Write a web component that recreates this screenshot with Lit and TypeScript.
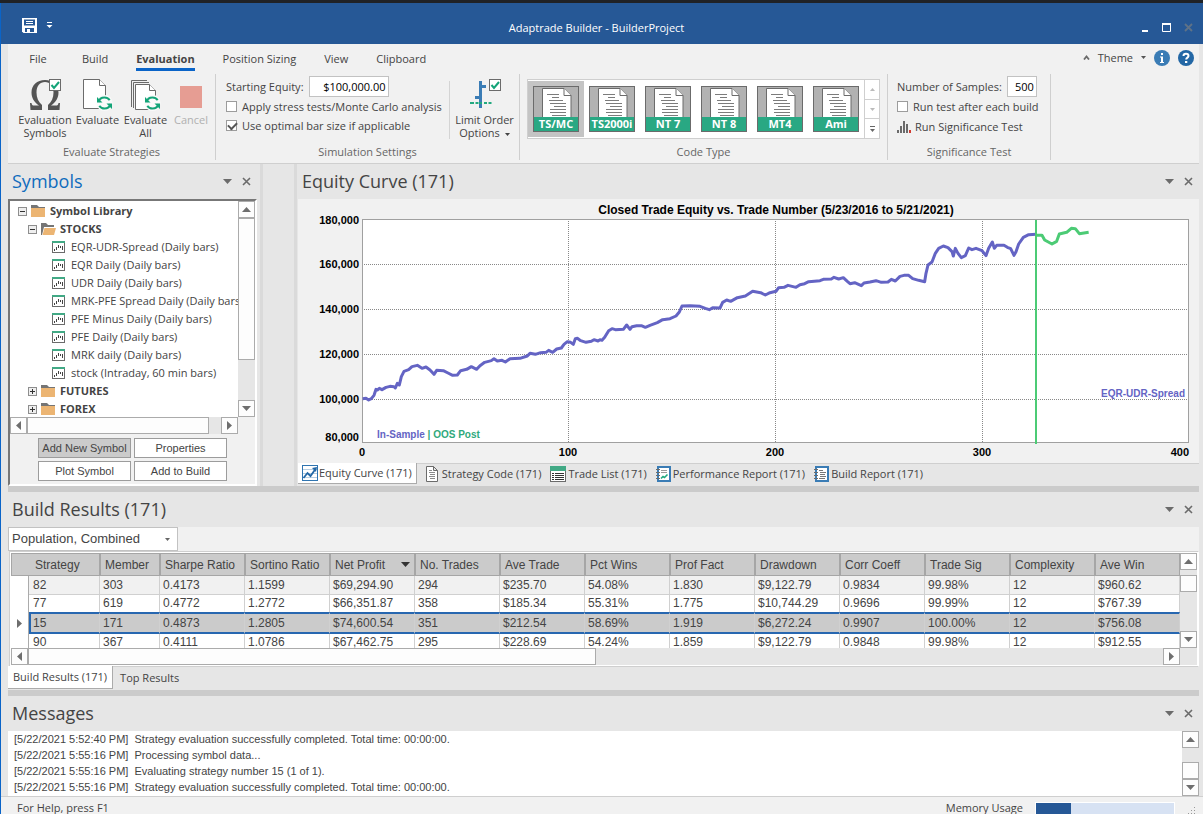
import { LitElement, html, svg, css, nothing } from "lit";
import { customElement, property } from "lit/decorators.js";
import { classMap } from "lit/directives/class-map.js";

const base = css`
  * { box-sizing: border-box; }
  button, input, select {
    font: inherit;
    color: inherit;
    margin: 0;
    padding: 0;
    border: 0;
    border-radius: 0;
    background: none;
    appearance: none;
  }
  svg { display: block; flex: none; }
`;

type Dir = "up" | "down" | "left" | "right";
const ARROWS: Record<Dir, string> = {
  up: "M4 11 8.5 6 13 11z",
  down: "M4 6 8.5 11 13 6z",
  left: "M11 4 6 8.5 11 13z",
  right: "M6 4 11 8.5 6 13z",
};

/** Classic scroll bar: two arrow buttons and a thumb on a grey track. */
@customElement("scroll-bar")
class ScrollBar extends LitElement {
  @property() dir = "vertical";
  @property({ type: Number }) before = 0;
  @property({ type: Number }) thumb = 17;
  static styles = [base, css`
    :host { display: block; flex: none; background: #e6e6e6; }
    .bar { display: flex; height: 100%; flex-direction: column; width: 17px; }
    .horizontal { flex-direction: row; width: 100%; height: 17px; }
    button { flex: none; width: 17px; height: 17px; border: 1px solid #ababab; background: #fdfdfd; }
    button svg { margin: -1px; }
    .track { flex: 1; display: flex; flex-direction: inherit; overflow: hidden; }
    .space { flex: none; }
    .thumb { flex: none; border: 1px solid #ababab; background: #fdfdfd; }
  `];
  arrow(d: Dir) {
    return html`<button aria-label="Scroll ${d}"><svg width="17" height="17"><path d=${ARROWS[d]} fill="#6e6e6e" /></svg></button>`;
  }
  render() {
    const h = this.dir === "horizontal";
    const side = h ? "width" : "height";
    return html`<div class="bar ${this.dir}">
      ${this.arrow(h ? "left" : "up")}
      <div class="track">
        <div class="space" style="${side}:${this.before}px"></div>
        <div class="thumb" style="${side}:${this.thumb}${h ? "%" : "px"}"></div>
      </div>
      ${this.arrow(h ? "right" : "down")}
    </div>`;
  }
}

/** Heading strip of a docked pane. */
@customElement("pane-title")
class PaneTitle extends LitElement {
  @property() label = "";
  @property({ type: Boolean }) active = false;
  static styles = [base, css`
    :host { display: block; flex: none; }
    header { display: flex; align-items: center; height: 35px; padding: 0 1px 0 4px; color: #444; }
    h2 { flex: 1; margin: 0; padding-bottom: 2px; font: 400 18px/24px "Open Sans", sans-serif; }
    .active { color: #0f6cbd; }
    button { width: 19px; height: 19px; display: grid; place-items: center; }
  `];
  render() {
    return html`<header>
      <h2 class=${this.active ? "active" : ""}>${this.label}</h2>
      <button aria-label="Pane menu"><svg width="9" height="5"><path d="M0 0h9L4.5 5z" fill="#6b6b6b" /></svg></button>
      <button aria-label="Close pane"><svg width="9" height="9"><path d="M1 1l7 7M8 1l-7 7" stroke="#6b6b6b" stroke-width="1.6" /></svg></button>
    </header>`;
  }
}

const greenCheck = (x: number, y: number) => svg`
  <rect x=${x + 0.5} y=${y + 0.5} width="11" height="11" fill="#fff" stroke="#6b6b6b" />
  <path d="M${x + 2.5} ${y + 6}l2.5 3 5-6" fill="none" stroke="#13a478" stroke-width="2" />`;

const cycle = (x: number, y: number) => svg`
  <g transform="translate(${x} ${y})" fill="none" stroke="#13a478" stroke-width="2">
    <circle cx="7.5" cy="7" r="8" fill="#fafafa" stroke="none" />
    <path d="M1.500 6C2.200 3.200 4.700 1.500 7.500 1.500c2.200 0 4 1 5.200 2.700M13.500 8c-.7 2.800-3.200 4.500-6 4.500-2.200 0-4-1-5.200-2.700" />
    <path d="M0 1v5.500h5.500zM15 13V7.500H9.500z" fill="#13a478" stroke="none" />
  </g>`;

const page = (x: number, y: number, w: number, h: number) => svg`
  <path d="M${x} ${y}h${w - 6}l6 6v${h - 6}h${-w}z" fill="#fff" stroke="#6b6b6b" />
  <path d="M${x + w - 6} ${y}v6h6" fill="#fff" stroke="#6b6b6b" />`;

const symbolsIcon = html`<svg width="34" height="34" viewBox="0 0 34 34">
  <path d="M2 24h1.500c.3 2 1 2.500 2.500 2.500h5C6 23 3.500 19 3.500 13.500 3.500 6 9 1 17 1s13.500 5 13.500 12.500c0 5.500-2.500 9.500-7.500 13h5c1.500 0 2.200-.5 2.500-2.500H32l-.5 7H20v-5c3.500-3 5.500-7 5.500-12.500C25.500 7 22 3 17 3S8.500 7 8.500 13.500C8.500 19 10.500 23 14 26v5H2.500z" fill="#555" />
  ${greenCheck(21, 0)}</svg>`;
const evalIcon = html`<svg width="34" height="34" viewBox="0 0 34 34">${page(2.5, 0.5, 22, 29)}${cycle(16, 17)}</svg>`;
const evalAllIcon = html`<svg width="34" height="34" viewBox="0 0 34 34">
  <path d="M2.500 28V1.500H18M4.500 29V3.500H20" fill="none" stroke="#6b6b6b" />${page(6.5, 5.5, 20, 25)}${cycle(16, 17)}</svg>`;
const cancelIcon = html`<svg width="34" height="34" viewBox="0 0 34 34"><rect x="6" y="7" width="22" height="22" fill="#e69d93" /></svg>`;
const limitIcon = html`<svg width="34" height="34" viewBox="0 0 34 34">
  <path d="M11 2h3v27h-3zM14 6h4v3h-4zM7 17h4v3H7z" fill="#3a7cb5" />
  <path d="M2 24h4M7.500 24h3M11 24h3M16 24h3M20.500 24h3" stroke="#22a980" stroke-width="2" />
  ${greenCheck(21, 0)}</svg>`;

const codeIcon = (label: string) => html`<svg width="46" height="46" viewBox="0 0 46 46">
  <rect width="46" height="46" fill="#b2b2b2" />
  <path d="M9.500 32V2.500H31l7 7V32z" fill="#fff" stroke="#6b6b6b" />
  <path d="M31 2.500v7h7" fill="#fff" stroke="#6b6b6b" />
  <path d="M14 8.500h12M19 11.500h7M16 14.500h14M17 17.500h16M21 20.500h12M17 23.500h16M17 26.500h16M19 29.500h14" stroke="#7c7c7c" />
  <rect y="31" width="46" height="15" fill="#29a883" />
  <rect x=".5" y=".5" width="45" height="45" fill="none" stroke="#6b6b6b" />
  <text x="23" y="42" text-anchor="middle" font-family="Open Sans, sans-serif" font-weight="700" font-size="11" fill="#fff">${label}</text>
</svg>`;

const folder = html`<svg width="15" height="14" viewBox="0 0 15 14">
  <path d="M0 1h6l2 2h6v2H0z" fill="#757575" /><path d="M0 4h14v9H0z" fill="#ecb573" /></svg>`;
const folderOpen = html`<svg width="15" height="14" viewBox="0 0 15 14">
  <path d="M0 1h5l2 2h6v2H3L1 13H0z" fill="#757575" /><path d="M3.500 6H15l-2 7H1.500z" fill="#ecb573" /></svg>`;
const barsIcon = html`<svg width="13" height="12" viewBox="0 0 13 12">
  <rect x=".5" y=".5" width="12" height="11" fill="#fff" stroke="#6b6b6b" />
  <rect width="13" height="2" fill="#41a985" />
  <path d="M2.500 8v2M4.500 6v3M6.500 4v3M8.500 5v2M10.500 5v4" stroke="#444" /></svg>`;
const expander = (open: boolean) => html`<svg width="9" height="9" viewBox="0 0 9 9">
  <rect x=".5" y=".5" width="8" height="8" fill="#efefef" stroke="#8e8e8e" />
  <path d=${open ? "M2 4.500h5" : "M2 4.500h5M4.500 2v5"} stroke="#333" /></svg>`;

const tabIcons = {
  curve: html`<svg width="16" height="16" viewBox="0 0 16 16"><rect x=".5" y=".5" width="15" height="15" fill="#fff" stroke="#2f74b0" />
    <path d="M1 4.500h14M1 8.500h14M1 12.500h14" stroke="#b8cfe2" /><path d="M1.500 13l4-5 3 3 5-7" fill="none" stroke="#2367a5" stroke-width="1.800" /><path d="M10 3l5-1-1 5z" fill="#2367a5" /></svg>`,
  page: html`<svg width="14" height="16" viewBox="0 0 14 16"><path d="M.5.5h7l4 4v11H.5z M7.500.5v4h4" fill="#fff" stroke="#6b6b6b" />
    <path d="M3 4.500h3M3 6.500h6M4 8.500h5M3 10.500h6M4 12.500h5" stroke="#8a8a8a" /></svg>`,
  list: html`<svg width="16" height="16" viewBox="0 0 16 16"><rect x=".5" y=".5" width="15" height="15" fill="#fff" stroke="#6b6b6b" />
    <rect width="16" height="5" fill="#41a985" /><path d="M2 7.500h2M5 7.500h9M2 9.500h2M5 9.500h9M2 11.500h2M5 11.500h9M2 13.500h2M5 13.500h9" stroke="#333" /></svg>`,
  perf: html`<svg width="15" height="16" viewBox="0 0 15 16"><rect x="2" y="1" width="12" height="14" fill="#fff" stroke="#3a7cb5" stroke-width="2" />
    <path d="M0 3.500h4M0 6.500h4M0 9.500h4M0 12.500h4" stroke="#6b6b6b" /><path d="M5 4.500h6M5 6.500h6" stroke="#9a9a9a" /><path d="M5 12.500l2-2 1.500 1 3-3" fill="none" stroke="#22a980" stroke-width="1.600" /></svg>`,
  report: html`<svg width="15" height="16" viewBox="0 0 15 16"><rect x="2" y="1" width="12" height="14" fill="#fff" stroke="#3a7cb5" stroke-width="2" />
    <path d="M0 3.500h4M0 6.500h4M0 9.500h4M0 12.500h4" stroke="#6b6b6b" /><path d="M5 4.500h4M6 6.500h6M6 8.500h5M6 10.500h6M5 12.500h6" stroke="#777" /></svg>`,
};

/** Application title bar and ribbon. */
@customElement("app-ribbon")
class AppRibbon extends LitElement {
  static styles = [base, css`
    :host { display: block; flex: none; font: 11px/13px "Open Sans", sans-serif; color: #444; }
    .title { display: grid; grid-template-columns: 1fr auto 1fr; align-items: center; height: 41px; padding: 8px 10px 0 21px; background: #265896; color: #fff; }
    h1 { margin: 0; padding-right: 22px; font: 400 11px/16px "Open Sans", sans-serif; }
    .quick { display: flex; align-items: center; gap: 9px; margin-top: -5px; }
    .win { display: flex; justify-content: flex-end; gap: 13px; align-items: center; }
    .ribbon { margin: 0 4px 0 7px; background: #f1f1f1; border-bottom: 1px solid #cfcfcf; height: 120px; }
    .tabs { display: flex; height: 30px; }
    .tabs button { padding: 8px 14px 0; height: 30px; display: flex; flex-direction: column; align-items: center; }
    .tabs .file { min-width: 60px; }
    .tabs .on { font-weight: 700; }
    .tabs .on::after { content: ""; align-self: stretch; height: 3px; margin-top: 3px; background: #0a64c8; }
    .right { margin-left: auto; display: flex; align-items: center; gap: 8px; padding: 0 5px 3px 0; }
    .right button { display: flex; flex-direction: row; align-items: center; gap: 8px; padding: 0; height: 17px; }
    .groups { display: flex; height: 86px; }
    .group { display: flex; flex-direction: column; border-right: 1px solid #cfcfcf; flex: none; }
    .body { flex: 1; display: flex; }
    .name { margin: 0; text-align: center; height: 16px; font: 400 11px/15px "Open Sans", sans-serif; color: #666; }
    .big { display: flex; flex-direction: column; align-items: center; padding-top: 5px; }
    .big:disabled { color: #b0b0b0; }
    .caret { display: inline-block; vertical-align: middle; margin-left: 2px; }
    .g1 { width: 208px; }
    .g1 .body { display: grid; grid-template-columns: 56px 49px 47px 44px; padding-left: 9px; }
    .g2 { width: 304px; }
    .settings { padding: 1px 7px 0 10px; width: 233px; }
    .rule { width: 1px; height: 58px; margin-top: 7px; background: #d4d4d4; }
    .field { display: flex; align-items: center; gap: 5px; height: 22px; }
    .field input { border: 1px solid #c2c2c2; background: #fff; color: #000; height: 21px; text-align: right; padding-right: 2px; }
    .equity { width: 80px; }
    .samples { width: 30px; }
    .check { display: flex; align-items: center; gap: 5px; height: 19px; white-space: nowrap; }
    .check input { flex: none; width: 11px; height: 11px; border: 1px solid #9c9c9c; background: #fff; display: grid; }
    .check input:checked::after { content: ""; width: 7px; height: 4px; margin: 1px; border: solid #555; border-width: 0 0 2px 2px; transform: rotate(-45deg); }
    .limit { flex: 1; }
    .g3 { width: 368px; }
    .gallery { flex: 1; display: flex; margin: 5px 7px 0; height: 60px; border: 1px solid #cfcfcf; background: #fff; }
    .gallery .item { flex: none; width: 56px; height: 56px; display: grid; place-items: center; margin-top: 1px; }
    .gallery .sel { background: #c4c4c4; }
    .spin { flex: 1; display: flex; flex-direction: column; border-left: 1px solid #cfcfcf; }
    .spin button { flex: 1; display: grid; place-items: center; }
    .spin button + button { border-top: 1px solid #cfcfcf; }
    .g4 { width: 163px; }
    .g4 .body { flex-direction: column; padding: 1px 9px 0; }
    .run { display: flex; align-items: center; gap: 4px; height: 21px; }
  `];
  render() {
    return html`
      <div class="title">
        <div class="quick">
          <svg width="15" height="15" viewBox="0 0 15 15"><path d="M0 0h15v15H1.500L0 13.500z" fill="#fff" /><path d="M2 1.500h11v6H2zM3 10h9v4H3z" fill="#265896" /><path d="M4 3.500h7M4 5.500h7" stroke="#fff" /><path d="M5 11h3v3H5z" fill="#fff" /></svg>
          <svg width="7" height="7" viewBox="0 0 7 7"><path d="M1 .5h5" stroke="#fff" /><path d="M.5 3h6l-3 3z" fill="#fff" /></svg>
        </div>
        <h1>Adaptrade Builder - BuilderProject</h1>
        <div class="win">
          <svg width="7" height="10"><path d="M0 8h6" stroke="#fff" stroke-width="2" /></svg>
          <svg width="9" height="9"><path d="M.5.5h8v8h-8z" fill="none" stroke="#fff" /><path d="M0 1h9" stroke="#fff" stroke-width="2" /></svg>
          <svg width="9" height="9"><path d="M1 1l7 7M8 1l-7 7" stroke="#5f7287" stroke-width="1.800" /></svg>
        </div>
      </div>
      <div class="ribbon">
        <nav class="tabs">
          <button class="file">File</button><button>Build</button><button class="on">Evaluation</button>
          <button>Position Sizing</button><button>View</button><button>Clipboard</button>
          <div class="right">
            <svg width="7" height="5"><path d="M1 4.500 3.500 1.500 6 4.500" fill="none" stroke="#6b6b6b" stroke-width="1.800" /></svg>
            <button>Theme <svg width="5" height="3"><path d="M0 0h5L2.500 3z" fill="#555" /></svg></button>
            <svg width="16" height="16"><circle cx="8" cy="8" r="8" fill="#3a7cb5" /><path d="M7 3h2v2H7zM6 6.500h3V12h1v1H6v-1h1V7.500H6z" fill="#fff" /></svg>
            <svg width="16" height="16"><circle cx="8" cy="8" r="8" fill="#2367a5" /><path d="M5.500 6c0-3 5-3 5 0 0 1.700-2.300 1.600-2.300 3.600" fill="none" stroke="#fff" stroke-width="2" /><path d="M7 11h2.300v2H7z" fill="#fff" /></svg>
          </div>
        </nav>
        <div class="groups">
          <section class="group g1">
            <div class="body">
              <button class="big">${symbolsIcon}<span>Evaluation<br />Symbols</span></button>
              <button class="big">${evalIcon}<span>Evaluate</span></button>
              <button class="big">${evalAllIcon}<span>Evaluate<br />All</span></button>
              <button class="big" disabled>${cancelIcon}<span>Cancel</span></button>
            </div>
            <h3 class="name">Evaluate Strategies</h3>
          </section>
          <section class="group g2">
            <div class="body">
              <div class="settings">
                <div class="field"><label for="eq">Starting Equity:</label><input id="eq" class="equity" value="$100,000.00" /></div>
                <label class="check"><input type="checkbox" />Apply stress tests/Monte Carlo analysis</label>
                <label class="check"><input type="checkbox" checked />Use optimal bar size if applicable</label>
              </div>
              <div class="rule"></div>
              <button class="big limit">${limitIcon}<span>Limit Order<br />Options <svg class="caret" width="5" height="3"><path d="M0 0h5L2.500 3z" fill="#444" /></svg></span></button>
            </div>
            <h3 class="name">Simulation Settings</h3>
          </section>
          <section class="group g3">
            <div class="body"><div class="gallery">
              ${["TS/MC", "TS2000i", "NT 7", "NT 8", "MT4", "Ami"].map((t, i) =>
                html`<button class=${classMap({ item: true, sel: i === 0 })}>${codeIcon(t)}</button>`)}
              <div class="spin">
                <button aria-label="Previous row"><svg width="5" height="3"><path d="M0 3h5L2.500 0z" fill="#bbb" /></svg></button>
                <button aria-label="Next row"><svg width="5" height="3"><path d="M0 0h5L2.500 3z" fill="#bbb" /></svg></button>
                <button aria-label="More"><svg width="5" height="6"><path d="M0 .5h5" stroke="#666" /><path d="M0 3h5L2.500 6z" fill="#666" /></svg></button>
              </div>
            </div></div>
            <h3 class="name">Code Type</h3>
          </section>
          <section class="group g4">
            <div class="body">
              <div class="field"><label for="ns">Number of Samples:</label><input id="ns" class="samples" value="500" /></div>
              <label class="check"><input type="checkbox" />Run test after each build</label>
              <button class="run"><svg width="14" height="12"><path d="M0 9h2v3H0zM3 5h2v7H3zM6 0h2v12H6zM9 3h2v9H9z" fill="#6b6b6b" /><path d="M12 9h2v3h-2z" fill="#d13b30" /></svg>Run Significance Test</button>
            </div>
            <h3 class="name">Significance Test</h3>
          </section>
        </div>
      </div>`;
  }
}

const LEAVES = [
  "EQR-UDR-Spread (Daily bars)", "EQR Daily (Daily bars)", "UDR Daily (Daily bars)", "MRK-PFE Spread Daily (Daily bars)",
  "PFE Minus Daily (Daily bars)", "PFE Daily (Daily bars)", "MRK daily (Daily bars)", "stock (Intraday, 60 min bars)",
];

/** Tree of symbols with its command buttons. */
@customElement("symbols-pane")
class SymbolsPane extends LitElement {
  static styles = [base, css`
    :host { box-sizing: border-box; display: flex; flex-direction: column; width: 255px; flex: none; padding-right: 3px; border-right: 3px solid #dadada; font: 11px/18px "Open Sans", sans-serif; color: #444; }
    .box { flex: 1; min-height: 0; display: flex; flex-direction: column; border: 2px solid; border-color: #777 #fff #fff #777; background: #f1f1f1; }
    .area { flex: 1; min-height: 0; display: flex; background: #fff; }
    .tree { flex: 1; min-width: 0; overflow: hidden; margin: 0; padding: 1px 0 0; list-style: none; }
    .tree li { display: flex; align-items: center; height: 18px; white-space: nowrap; }
    .node { font-weight: 700; gap: 4px; padding-left: 18px; }
    .root { padding-left: 8px; }
    .leaf { gap: 6px; padding-left: 42px; }
    .hbar { display: flex; }
    .hbar scroll-bar { flex: 1; margin-right: 17px; }
    .buttons { display: grid; grid-template-columns: 93px 93px; justify-content: center; gap: 3px; padding: 4px 0 3px; }
    .buttons button { height: 20px; border: 1px solid #9c9c9c; background: #fff; font: 11px/18px "Liberation Sans", sans-serif; }
    .buttons .down { background: #cbcbcb; }
  `];
  render() {
    const node = (t: string, icon: unknown, open: boolean, root = false) =>
      html`<li class=${classMap({ node: true, root })}>${expander(open)}${icon}<span>${t}</span></li>`;
    return html`
      <pane-title label="Symbols" active></pane-title>
      <div class="box">
        <div class="area">
          <ul class="tree">
            ${node("Symbol Library", folder, true, true)}
            ${node("STOCKS", folderOpen, true)}
            ${LEAVES.map((t) => html`<li class="leaf">${barsIcon}<span>${t}</span></li>`)}
            ${node("FUTURES", folder, false)}
            ${node("FOREX", folder, false)}
          </ul>
          <scroll-bar .thumb=${142}></scroll-bar>
        </div>
        <div class="hbar"><scroll-bar dir="horizontal" .thumb=${94}></scroll-bar></div>
        <div class="buttons">
          <button class="down">Add New Symbol</button><button>Properties</button>
          <button>Plot Symbol</button><button>Add to Build</button>
        </div>
      </div>`;
  }
}

const IN_SAMPLE = "218,716 228,715 236,720 244,716 252,706 258,688 262,690 268,685 276,689 288,682 300,679 312,680 316,684 322,670 328,675 334,650 342,634 356,629 366,620 382,616 396,625 408,621 420,630 432,643 440,631 460,632 474,639 488,646 502,645 512,632 530,628 544,620 560,628 570,617 584,607 604,602 612,596 622,603 636,601 646,606 660,596 690,595 712,588 720,580 736,583 752,578 768,577 776,571 788,577 800,567 814,564 822,553 832,545 842,547 850,553 856,536 862,535 872,542 888,547 904,544 912,539 924,543 930,539 936,541 944,532 956,512 966,506 976,509 1000,508 1010,495 1020,508 1026,500 1040,497 1054,497 1066,502 1080,496 1102,488 1118,479 1140,476 1158,468 1168,456 1176,438 1200,437 1230,439 1246,445 1258,449 1268,443 1290,444 1298,427 1310,420 1322,424 1342,413 1366,408 1388,394 1412,398 1426,405 1440,398 1458,394 1466,383 1482,382 1494,376 1518,382 1530,374 1544,371 1556,365 1590,362 1600,358 1624,357 1632,352 1646,357 1660,353 1672,364 1680,371 1694,368 1714,377 1722,369 1740,366 1758,362 1774,367 1794,366 1804,358 1816,363 1830,349 1842,346 1856,346 1868,356 1886,361 1904,365 1908,340 1914,315 1926,306 1936,280 1946,265 1960,258 1974,263 1986,275 1990,288 1996,265 2004,280 2014,293 2026,287 2036,264 2046,269 2058,265 2076,272 2088,287 2096,265 2107,246 2113,265 2120,256 2142,256 2152,262 2162,266 2172,286 2178,275 2186,252 2200,232 2216,224 2238,223";
const OUT_OF_SAMPLE = "2238,226 2256,226 2264,240 2286,252 2300,244 2308,222 2330,217 2344,205 2356,206 2368,221 2396,217";

/** Chart pane with its view tabs. */
@customElement("equity-pane")
class EquityPane extends LitElement {
  static styles = [base, css`
    :host { box-sizing: border-box; display: flex; flex-direction: column; flex: 1; min-width: 0; padding-left: 1px; color: #444; font: 11px/16px "Open Sans", sans-serif; }
    .chart { flex: 1; min-height: 0; background: #f1f1f1; }
    .chart svg { width: 100%; height: 100%; font: 700 11px "Liberation Sans", sans-serif; }
    .heading { font-size: 12px; }
    .note { font-size: 10px; }
    .tabs { display: flex; height: 23px; border-top: 1px solid #cfcfcf; gap: 9px; padding-bottom: 2px; }
    .tabs button { display: flex; align-items: center; gap: 2px; white-space: nowrap; }
    .tabs .on { gap: 1px; margin-top: -1px; padding: 0 4px; background: #fff; border: solid #ababab; border-width: 0 1px 1px 0; }
  `];
  render() {
    const ys: [string, number][] = [["180,000", 25], ["160,000", 69], ["140,000", 114], ["120,000", 159], ["100,000", 204], ["80,000", 242]];
    const xs: [string, number][] = [["0", 64], ["100", 270], ["200", 477], ["300", 684]];
    return html`
      <pane-title label="Equity Curve (171)"></pane-title>
      <div class="chart">
        <svg viewBox="0 0 901 264" role="img" aria-label="Closed trade equity">
          <text class="heading" x="478" y="15" text-anchor="middle">Closed Trade Equity vs. Trade Number (5/23/2016 to 5/21/2021)</text>
          <rect x="64.500" y="20.500" width="826" height="223" fill="#fff" stroke="#a0a0a0" />
          <g stroke="#888" stroke-dasharray="1 1">
            ${[65.5, 110.5, 155.5, 200.5].map((y) => svg`<path d="M66 ${y}H890" />`)}
            ${[270.5, 477.5, 684.5].map((x) => svg`<path d="M${x} 22V243" />`)}
          </g>
          <g transform="translate(-8 -39) scale(.33333)" fill="none" stroke-width="9" stroke-linejoin="round">
            <polyline points=${IN_SAMPLE} stroke="#6464c4" />
            <polyline points=${OUT_OF_SAMPLE} stroke="#4ccb75" />
          </g>
          <path d="M738 21V245" stroke="#4ccb75" stroke-width="2" />
          ${ys.map(([t, y]) => svg`<text x="61" y=${y} text-anchor="end">${t}</text>`)}
          ${xs.map(([t, x]) => svg`<text x=${x} y="257" text-anchor="middle">${t}</text>`)}
          <text x="891" y="257" text-anchor="end">400</text>
          <text class="note" x="79" y="239" fill="#6464c4">In-Sample <tspan fill="#2fa97c">| OOS Post</tspan></text>
          <text class="note" x="887" y="198" text-anchor="end" fill="#6464c4">EQR-UDR-Spread</text>
        </svg>
      </div>
      <nav class="tabs">
        <button class="on">${tabIcons.curve}Equity Curve (171)</button>
        <button>${tabIcons.page}Strategy Code (171)</button>
        <button>${tabIcons.list}Trade List (171)</button>
        <button>${tabIcons.perf}Performance Report (171)</button>
        <button>${tabIcons.report}Build Report (171)</button>
      </nav>`;
  }
}

const COLS = ["Strategy", "Member", "Sharpe Ratio", "Sortino Ratio", "Net Profit", "No. Trades", "Ave Trade", "Pct Wins", "Prof Fact", "Drawdown", "Corr Coeff", "Trade Sig", "Complexity", "Ave Win"];
const WIDTHS = [71, 60, ...Array(12).fill(85)];
const ROWS = [
  ["82", "303", "0.4173", "1.1599", "$69,294.90", "294", "$235.70", "54.08%", "1.830", "$9,122.79", "0.9834", "99.98%", "12", "$960.62"],
  ["77", "619", "0.4772", "1.2772", "$66,351.87", "358", "$185.34", "55.31%", "1.775", "$10,744.29", "0.9696", "99.99%", "12", "$767.39"],
  ["15", "171", "0.4873", "1.2805", "$74,600.54", "351", "$212.54", "58.69%", "1.919", "$6,272.24", "0.9907", "100.00%", "12", "$756.08"],
  ["90", "367", "0.4111", "1.0786", "$67,462.75", "295", "$228.69", "54.24%", "1.859", "$9,122.79", "0.9848", "99.98%", "12", "$912.55"],
];
const SELECTED = 2;

/** Table of evaluated strategies. */
@customElement("results-pane")
class ResultsPane extends LitElement {
  static styles = [base, css`
    :host { display: block; flex: none; color: #444; font: 12px/16px "Liberation Sans", sans-serif; }
    .pick { display: flex; height: 24px; background: #f1f1f1; }
    .combo { position: relative; width: 170px; }
    .combo select { width: 100%; height: 24px; border: 1px solid #c2c2c2; background: #fff; padding: 0 3px; font-size: 13px; }
    .combo svg { position: absolute; right: 8px; top: 11px; pointer-events: none; }
    .box { border: 1px solid #cfcfcf; border-right-color: #fff; padding: 1px; background: #fff; margin-left: 1px; }
    .area { display: flex; height: 95px; }
    .clip { flex: 1; min-width: 0; overflow: hidden; }
    table { table-layout: fixed; border-collapse: separate; border-spacing: 0; width: 1169px; }
    th { height: 23px; padding: 0 0 0 4px; text-align: left; font-weight: 400; background: #cbcbcb; border: 1px solid #a6a6a6; white-space: nowrap; }
    th:first-child { border-right: 0; }
    th.lead { border-left: 0; padding-left: 6px; }
    .sort { display: flex; justify-content: space-between; align-items: center; padding-right: 4px; }
    td { height: 17px; padding: 0 0 0 3px; line-height: 17px; border-right: 1px solid #d0d0d0; white-space: nowrap; }
    td.mark { padding-left: 6px; border-right-color: #ababab; background: #fff; }
    .mark + td { padding-left: 4px; }
    .first td { height: 19px; border-bottom: 1px solid #d0d0d0; background: #f1f1f1; }
    .first .mark { border-bottom: 0; background: #fff; }
    .sel td { height: 22px; background: #cbcbcb; border-top: 2px solid #2767b0; border-bottom: 2px solid #2767b0; }
    .sel .mark { border-top: 0; border-bottom: 0; background: #fff; }
    .sel .mark + td { padding-left: 2px; border-left: 2px solid #2767b0; }
    .hbar { display: flex; background: #e6e6e6; }
    .hbar scroll-bar { flex: 1; margin-right: 17px; }
    .tabs { display: flex; height: 23px; gap: 7px; font: 11px/20px "Open Sans", sans-serif; }
    .tabs button { height: 22px; }
    .tabs .on { background: #fff; padding: 0 5px; margin-top: -1px; height: 23px; border: solid #ababab; border-width: 0 1px 1px 0; }
  `];
  render() {
    return html`
      <pane-title label="Build Results (171)"></pane-title>
      <div class="pick"><div class="combo">
        <select aria-label="Population"><option>Population, Combined</option></select>
        <svg width="5" height="3"><path d="M0 0h5L2.500 3z" fill="#666" /></svg>
      </div></div>
      <div class="box">
        <div class="area">
          <div class="clip"><table>
            <colgroup><col style="width:18px" />${WIDTHS.map((w) => html`<col style="width:${w}px" />`)}</colgroup>
            <thead><tr><th></th>${COLS.map((c, i) => html`<th class=${i ? "" : "lead"}>${c === "Net Profit"
              ? html`<span class="sort">${c}<svg width="9" height="5"><path d="M0 0h9L4.500 5z" fill="#333" /></svg></span>` : c}</th>`)}</tr></thead>
            <tbody>${ROWS.map((r, i) => html`<tr class=${classMap({ first: i === 0, sel: i === SELECTED })}>
              <td class="mark">${i === SELECTED ? html`<svg width="5" height="9"><path d="M0 0l5 4.500L0 9z" fill="#6e6e6e" /></svg>` : nothing}</td>
              ${r.map((v) => html`<td>${v}</td>`)}</tr>`)}</tbody>
          </table></div>
          <scroll-bar .before=${5} .thumb=${17}></scroll-bar>
        </div>
        <div class="hbar"><scroll-bar dir="horizontal" .thumb=${50}></scroll-bar></div>
      </div>
      <nav class="tabs"><button class="on">Build Results (171)</button><button>Top Results</button></nav>`;
  }
}

const MESSAGES: [string, string][] = [
  ["5/22/2021 5:52:40 PM", "Strategy evaluation successfully completed. Total time: 00:00:00."],
  ["5/22/2021 5:55:16 PM", "Processing symbol data..."],
  ["5/22/2021 5:55:16 PM", "Evaluating strategy number 15 (1 of 1)."],
  ["5/22/2021 5:55:16 PM", "Strategy evaluation successfully completed. Total time: 00:00:00."],
];

@customElement("app-root")
class AppRoot extends LitElement {
  static styles = [base, css`
    :host { box-sizing: border-box; display: flex; flex-direction: column; height: 100vh; overflow: hidden; background: #e6e6e6; border-top: 3px solid #202226; color: #444; }
    .window { flex: 1; min-height: 0; display: flex; flex-direction: column; border-left: 1px solid #0a64c8; }
    .docks { flex: 1; min-height: 0; display: flex; flex-direction: column; padding: 0 4px 0 7px; }
    .upper { flex: 1; min-height: 0; display: flex; }
    .gutter { flex: none; width: 34px; border-right: 3px solid #dadada; }
    .split { flex: none; height: 6px; background: #cbcbcb; }
    .log { display: flex; height: 65px; background: #fff; font: 11px/16px "Liberation Sans", sans-serif; }
    .lines { flex: 1; margin: 0; padding: 0 6px; list-style: none; white-space: pre; }
    .status { flex: none; display: flex; align-items: flex-start; gap: 12px; height: 18px; overflow: hidden; border-top: 1px solid #cfcfcf; background: #f1f1f1; padding: 3px 7px 0 16px; font: 11px/16px "Open Sans", sans-serif; }
    .status label { margin-left: auto; }
    .meter { appearance: none; display: block; width: 140px; height: 15px; margin-top: 2px; border: 1px solid #fff; background: #d7e2f3; }
    .meter::-webkit-progress-bar { background: #d7e2f3; }
    .meter::-webkit-progress-value { background: #265896; }
    .grip { margin-top: 6px; }
  `];
  render() {
    return html`<div class="window">
      <app-ribbon></app-ribbon>
      <main class="docks">
        <div class="upper">
          <symbols-pane></symbols-pane>
          <div class="gutter"></div>
          <equity-pane></equity-pane>
        </div>
        <div class="split"></div>
        <results-pane></results-pane>
        <div class="split"></div>
        <section>
          <pane-title label="Messages"></pane-title>
          <div class="log">
            <ul class="lines">${MESSAGES.map(([t, m]) => html`<li>[${t}]  ${m}</li>`)}</ul>
            <scroll-bar .before=${14} .thumb=${17}></scroll-bar>
          </div>
        </section>
      </main>
      <footer class="status">
        <span>For Help, press F1</span>
        <label for="mem">Memory Usage</label>
        <progress id="mem" class="meter" max="100" value="25"></progress>
        <svg class="grip" width="9" height="9"><path d="M7 1h1v1H7zM4 4h1v1H4zM7 4h1v1H7zM1 7h1v1H1zM4 7h1v1H4zM7 7h1v1H7z" fill="#999" /></svg>
      </footer>
    </div>`;
  }
}
